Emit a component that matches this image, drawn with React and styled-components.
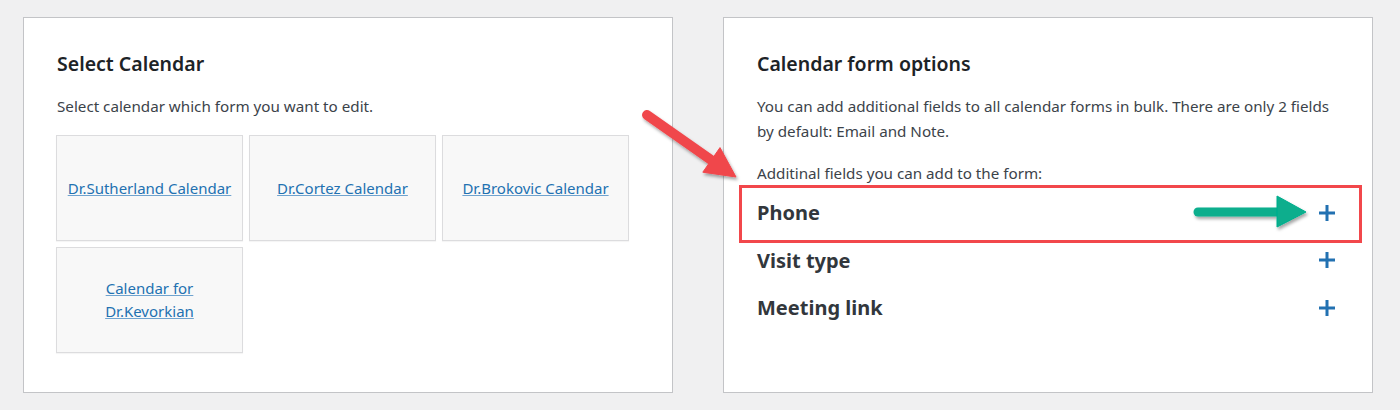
import React from "react";
import styled, { createGlobalStyle } from "styled-components";

const GlobalStyle = createGlobalStyle`
  body {
    margin: 0;
    background: #f0f0f1;
    font-family: "Noto Sans", "Open Sans", Arial, sans-serif;
    color: #3c434a;
  }
`;

const calendars = [
  "Dr.Sutherland Calendar",
  "Dr.Cortez Calendar",
  "Dr.Brokovic Calendar",
  "Calendar for Dr.Kevorkian",
];

const fields = ["Phone", "Visit type", "Meeting link"];

function PlusIcon() {
  return (
    <svg width="16" height="16" viewBox="0 0 16 16">
      <rect x="0" y="6.5" width="16" height="3" fill="#2271b1" />
      <rect x="6.5" y="0" width="3" height="16" fill="#2271b1" />
    </svg>
  );
}

function RedArrow() {
  return (
    <RedArrowSvg width="120" height="90" viewBox="0 0 120 90">
      <defs>
        <filter id="redShadow" x="-20%" y="-20%" width="150%" height="150%">
          <feDropShadow dx="1.5" dy="2.5" stdDeviation="1.8" floodColor="#000" floodOpacity="0.35" />
        </filter>
      </defs>
      <g filter="url(#redShadow)" fill="#f0474c" stroke="#f0474c">
        <line x1="17" y1="15" x2="84" y2="62" strokeWidth="10" strokeLinecap="round" />
        <polygon points="106,77 72.8,72.2 90,47.6" strokeWidth="1" strokeLinejoin="round" />
      </g>
    </RedArrowSvg>
  );
}

function GreenArrow() {
  return (
    <GreenArrowSvg width="125" height="44" viewBox="0 0 125 44">
      <defs>
        <filter id="greenShadow" x="-20%" y="-40%" width="140%" height="200%">
          <feDropShadow dx="1.5" dy="2.5" stdDeviation="1.8" floodColor="#000" floodOpacity="0.35" />
        </filter>
      </defs>
      <g filter="url(#greenShadow)" fill="#07ae8d" stroke="#07ae8d">
        <line x1="10" y1="22" x2="92" y2="22" strokeWidth="9" strokeLinecap="round" />
        <polygon points="89,6 118,22 89,37" strokeWidth="1" strokeLinejoin="round" />
      </g>
    </GreenArrowSvg>
  );
}

export default function App() {
  return (
    <Page>
      <GlobalStyle />
      <Panel>
        <Title>Select Calendar</Title>
        <Text>Select calendar which form you want to edit.</Text>
        <CardGrid>
          {calendars.map((name) => (
            <Card key={name}>
              <CardLink href="#">{name}</CardLink>
            </Card>
          ))}
        </CardGrid>
      </Panel>

      <RedArrow />

      <Panel>
        <Title>Calendar form options</Title>
        <Text>
          You can add additional fields to all calendar forms in bulk. There are only 2 fields by
          default: Email and Note.
        </Text>
        <Text $gap={17}>Additinal fields you can add to the form:</Text>
        <FieldList>
          {fields.map((field, i) => (
            <FieldRow key={field} $highlight={i === 0}>
              <FieldName>{field}</FieldName>
              {i === 0 && <GreenArrow />}
              <AddButton aria-label={"Add " + field}>
                <PlusIcon />
              </AddButton>
            </FieldRow>
          ))}
        </FieldList>
      </Panel>
    </Page>
  );
}

const Page = styled.div`
  position: relative;
  display: flex;
  gap: 50px;
  padding: 17px 23px;
  box-sizing: border-box;
  width: 1400px;
  height: 410px;
`;

const Panel = styled.section`
  position: relative;
  width: 650px;
  height: 376px;
  box-sizing: border-box;
  background: #fff;
  border: 1px solid #c3c4c7;
  padding: 32px 33px;
`;

const Title = styled.h2`
  margin: 0;
  font-size: 19.5px;
  line-height: 28px;
  font-weight: 600;
  color: #1d2327;
`;

const Text = styled.p`
  margin: ${(p) => p.$gap || 16}px 0 0;
  font-size: 15.2px;
  line-height: 25px;
  color: #3c434a;
`;

const CardGrid = styled.div`
  display: grid;
  grid-template-columns: repeat(3, 187px);
  grid-auto-rows: 106px;
  gap: 6px;
  margin-top: 16px;
  margin-left: -1px;
`;

const Card = styled.div`
  display: flex;
  align-items: center;
  justify-content: center;
  box-sizing: border-box;
  padding: 0 10px;
  text-align: center;
  background: #f8f8f8;
  border: 1px solid #dcdcde;
  box-shadow: 0 1px 1px rgba(0, 0, 0, 0.04);
`;

const CardLink = styled.a`
  color: #2271b1;
  font-size: 15px;
  line-height: 23px;
  text-decoration: underline;
  text-decoration-color: #6fa3cf;
`;

const FieldList = styled.div`
  display: flex;
  flex-direction: column;
  margin-top: 3px;
`;

const FieldRow = styled.div`
  position: relative;
  display: flex;
  align-items: center;
  justify-content: space-between;
  height: 47.5px;
  padding-right: 4px;

  ${(p) =>
    p.$highlight &&
    `
    &::after {
      content: "";
      position: absolute;
      top: -4px;
      bottom: -6px;
      left: -18px;
      right: -23px;
      border: 3px solid #f2474b;
      pointer-events: none;
    }
  `}
`;

const FieldName = styled.span`
  font-size: 20px;
  font-weight: 700;
  color: #32373c;
`;

const AddButton = styled.button`
  display: flex;
  align-items: center;
  justify-content: center;
  padding: 0;
  border: 0;
  background: none;
  cursor: pointer;
`;

const RedArrowSvg = styled.svg`
  position: absolute;
  left: 630px;
  top: 100px;
  z-index: 2;
`;

const GreenArrowSvg = styled.svg`
  position: absolute;
  left: 431px;
  top: 1px;
`;
